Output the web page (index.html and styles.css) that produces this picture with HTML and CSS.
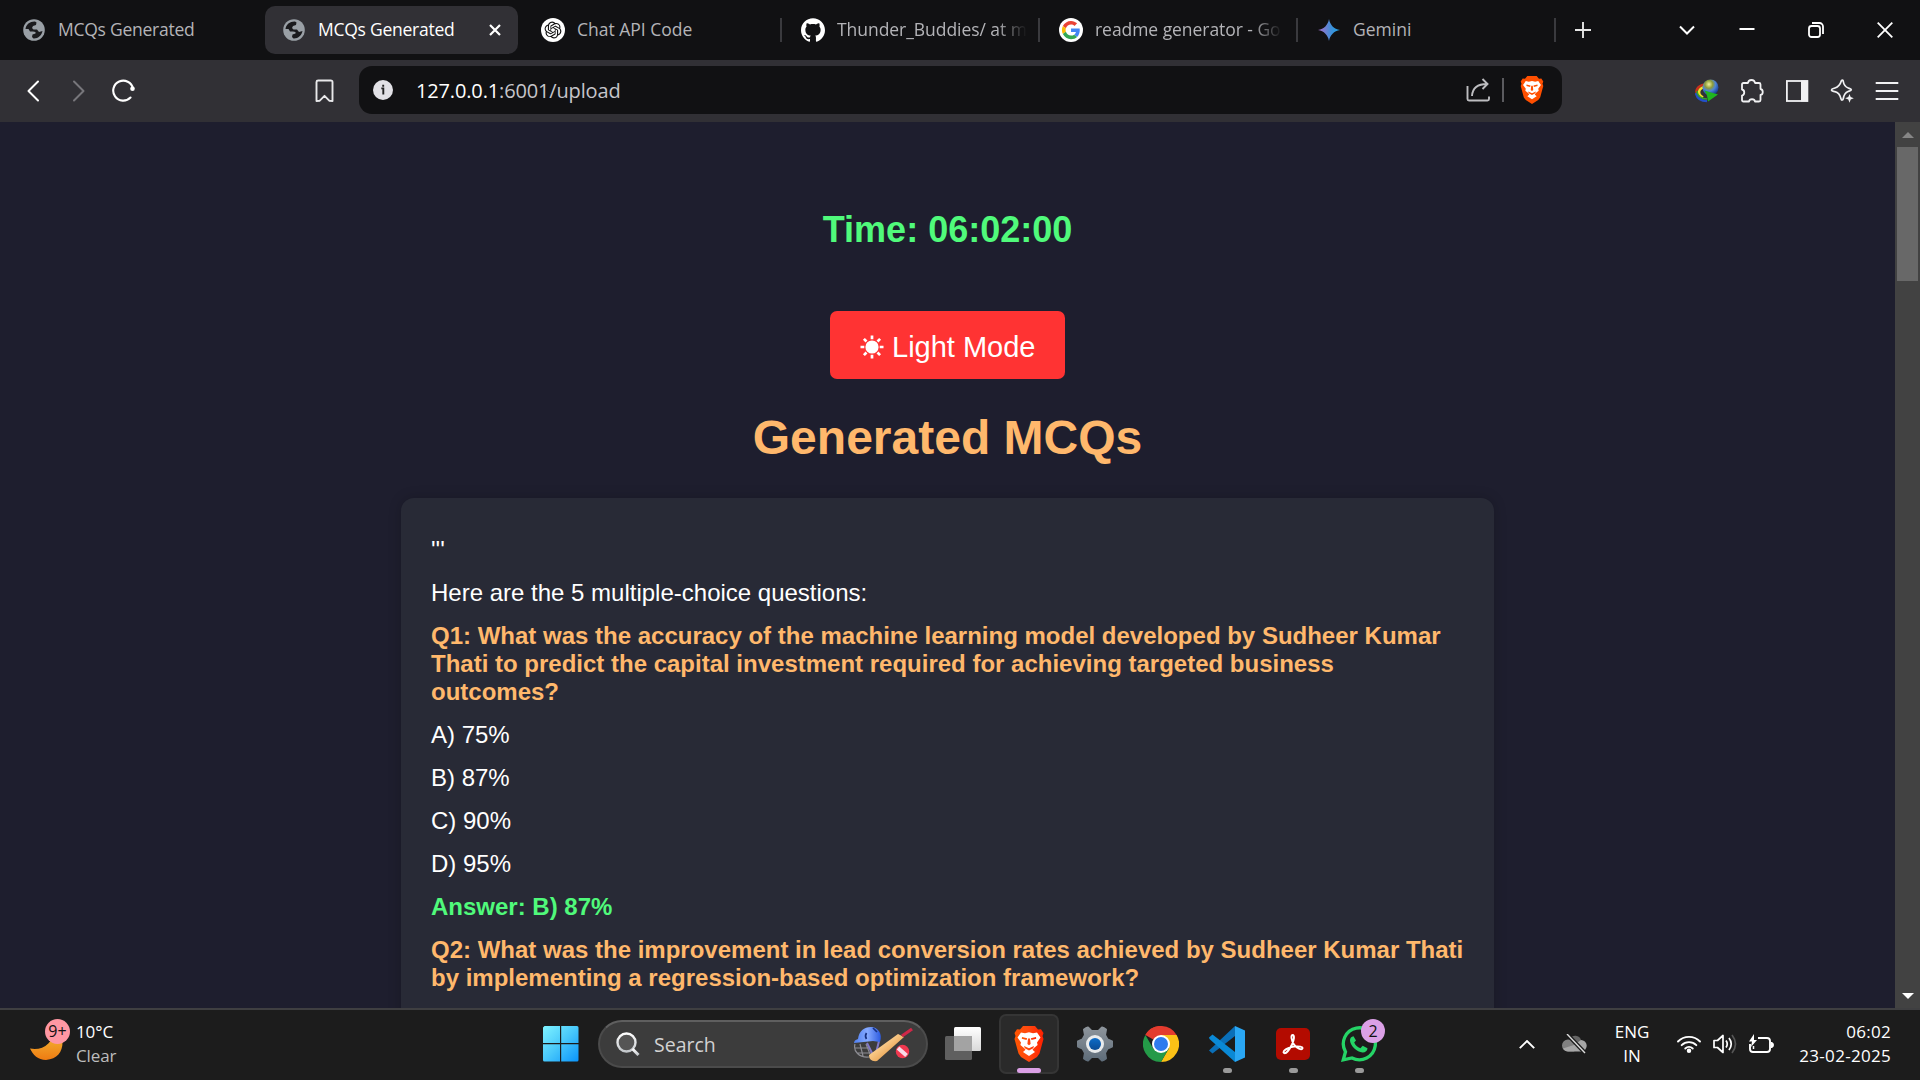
FILE: index.html
```html
<!DOCTYPE html>
<html lang="en">
<head>
<meta charset="utf-8">
<title>MCQs Generated</title>
<link rel="stylesheet" href="styles.css">
</head>
<body>
<svg class="defs" width="0" height="0">
  <defs>
    <linearGradient id="gem" x1="0" x2="1"><stop offset="0.1" stop-color="#9b72cb"/><stop offset="0.6" stop-color="#3e8fd8"/><stop offset="1" stop-color="#1ba1e3"/></linearGradient>
    <linearGradient id="lionfill" x1="0" x2="1"><stop offset="0" stop-color="#ff5500"/><stop offset="0.45" stop-color="#ff4a10"/><stop offset="1" stop-color="#ff2000"/></linearGradient>
    <linearGradient id="win" x1="0" y1="0" x2="1" y2="1"><stop offset="0" stop-color="#7ff3ff"/><stop offset="0.5" stop-color="#48c8fb"/><stop offset="1" stop-color="#0a94fb"/></linearGradient>
    <linearGradient id="moon" x1="0" y1="0" x2="0" y2="1"><stop offset="0" stop-color="#f5c63c"/><stop offset="1" stop-color="#ee7b12"/></linearGradient>
    <linearGradient id="gear" x1="0" y1="0" x2="0" y2="1"><stop offset="0" stop-color="#8d949b"/><stop offset="1" stop-color="#5f6d7a"/></linearGradient>
    <linearGradient id="hub" x1="0" y1="0" x2="0" y2="1"><stop offset="0" stop-color="#0d6cc8"/><stop offset="1" stop-color="#0a4b94"/></linearGradient>
    <linearGradient id="helm" x1="0" x2="1"><stop offset="0" stop-color="#4f7ff0"/><stop offset="0.5" stop-color="#86aaff"/><stop offset="1" stop-color="#2b5ae0"/></linearGradient>
    <linearGradient id="bat" x1="0" y1="0" x2="1" y2="1"><stop offset="0.3" stop-color="#ffd79a"/><stop offset="0.8" stop-color="#e2943f"/></linearGradient>
    <linearGradient id="sheet" x1="0" y1="0" x2="0" y2="1"><stop offset="0" stop-color="#ffffff"/><stop offset="1" stop-color="#d9d9d9"/></linearGradient>
    <linearGradient id="lens" x1="0" y1="0" x2="0" y2="1"><stop offset="0" stop-color="#ffffff"/><stop offset="1" stop-color="#c4c8cc"/></linearGradient>
    <radialGradient id="earth" cx="0.4" cy="0.3" r="0.7"><stop offset="0" stop-color="#f0f29a"/><stop offset="0.35" stop-color="#8d9b3a"/><stop offset="0.6" stop-color="#4d84d8"/><stop offset="1" stop-color="#16398e"/></radialGradient>
    <symbol id="globe" viewBox="0 0 22 22"><circle cx="11" cy="11" r="10.800" fill="#9aa0a6"/><path fill="#1b1b1e" d="M2.500 10C3 5.500 7 2.300 12 2.500l1.500 1-.5 2.500-3 1-1 2 1.500 1.500H14l2 2.500 3.500-1c-.8 4.500-4.500 7.800-9 7.500l-1.500-1.500.5-2.500 3-1v-1.500L10 12.500H7L5.500 10z"/></symbol>
    <symbol id="lion" viewBox="0 0 30 36"><path d="M9 0h12l3 3.500 3-.3L29.500 7l-1 3 1 3-4 14.500-2.500 3.500L15 36l-8-5-2.500-3.500L.5 13l1-3-1-3L3 3.200l3 .3z"/><path fill="#fff" d="M7 6.500l4 .8 4-1 4 1 4-.8 3.500 5-3.500 5 .6 2.500-3.600 3-1.500 1.800L21 26l-6 4-6-4 2.500-2.200L10 22l-3.600-3 .6-2.500-3.500-5z"/><path d="M8 11l5.200 1.300-.7 1.700-4.700-1.200zm14 0l-5.200 1.300.7 1.700 4.700-1.200zM14 12.500h2l.6 5.500-1.600 1.300-1.600-1.300zM10 20l5 2.200 5-2.200-.8 2.200-4.200 2.200-4.200-2.200z"/></symbol>
  </defs>
</svg>

<header class="tabs">
  <div class="tab first"><svg class="fav globe"><use href="#globe"/></svg><span class="label tight">MCQs Generated</span></div>
  <div class="tab active"><svg class="fav globe"><use href="#globe"/></svg><span class="label tight">MCQs Generated</span>
    <svg class="close" width="12" height="12" viewBox="0 0 12 12"><path d="M1 1l10 10M11 1L1 11" stroke="#fff" stroke-width="2.200"/></svg></div>
  <div class="tab sep third"><svg class="fav" viewBox="0 0 24 24"><circle cx="12" cy="12" r="12" fill="#fff"/><g transform="translate(3.600 3.600) scale(.7)"><path fill="#111" d="M22.2819 9.8211a5.9847 5.9847 0 0 0-.5157-4.9108 6.0462 6.0462 0 0 0-6.5098-2.9A6.0651 6.0651 0 0 0 4.9807 4.1818a5.9847 5.9847 0 0 0-3.9977 2.9 6.0462 6.0462 0 0 0 .7427 7.0966 5.98 5.98 0 0 0 .511 4.9107 6.051 6.051 0 0 0 6.5146 2.9001A5.9847 5.9847 0 0 0 13.2599 24a6.0557 6.0557 0 0 0 5.7718-4.2058 5.9894 5.9894 0 0 0 3.9977-2.9001 6.0557 6.0557 0 0 0-.7475-7.0729zm-9.022 12.6081a4.4755 4.4755 0 0 1-2.8764-1.0408l.1419-.0804 4.7783-2.7582a.7948.7948 0 0 0 .3927-.6813v-6.7369l2.02 1.1686a.071.071 0 0 1 .038.052v5.5826a4.504 4.504 0 0 1-4.4945 4.4944zm-9.6607-4.1254a4.4708 4.4708 0 0 1-.5346-3.0137l.142.0852 4.783 2.7582a.7712.7712 0 0 0 .7806 0l5.8428-3.3685v2.3324a.0804.0804 0 0 1-.0332.0615L9.74 19.9502a4.4992 4.4992 0 0 1-6.1408-1.6464zM2.3408 7.8956a4.485 4.485 0 0 1 2.3655-1.9728V11.6a.7664.7664 0 0 0 .3879.6765l5.8144 3.3543-2.0201 1.1685a.0757.0757 0 0 1-.071 0l-4.8303-2.7865A4.504 4.504 0 0 1 2.3408 7.872zm16.5963 3.8558L13.1038 8.364 15.1192 7.2a.0757.0757 0 0 1 .071 0l4.8303 2.7913a4.4944 4.4944 0 0 1-.6765 8.1042v-5.6772a.79.79 0 0 0-.407-.667zm2.0107-3.0231l-.142-.0852-4.7735-2.7818a.7759.7759 0 0 0-.7854 0L9.409 9.2297V6.8974a.0662.0662 0 0 1 .0284-.0615l4.8303-2.7866a4.4992 4.4992 0 0 1 6.6802 4.66zM8.3065 12.863l-2.02-1.1638a.0804.0804 0 0 1-.038-.0567V6.0742a4.4992 4.4992 0 0 1 7.3757-3.4537l-.142.0805L8.704 5.459a.7948.7948 0 0 0-.3927.6813zm1.0976-2.3654l2.602-1.4998 2.6069 1.4998v2.9994l-2.5974 1.4997-2.6067-1.4997Z"/></g></svg><span class="label">Chat API Code</span></div>
  <div class="tab sep"><svg class="fav" viewBox="0 0 24 24"><path fill="#fff" d="M12 .297c-6.63 0-12 5.373-12 12 0 5.303 3.438 9.8 8.205 11.385.6.113.82-.258.82-.577 0-.285-.01-1.04-.015-2.04-3.338.724-4.042-1.61-4.042-1.61C4.422 18.07 3.633 17.7 3.633 17.7c-1.087-.744.084-.729.084-.729 1.205.084 1.838 1.236 1.838 1.236 1.07 1.835 2.809 1.305 3.495.998.108-.776.417-1.305.76-1.605-2.665-.3-5.466-1.332-5.466-5.93 0-1.31.465-2.38 1.235-3.22-.135-.303-.54-1.523.105-3.176 0 0 1.005-.322 3.3 1.23.96-.267 1.98-.399 3-.405 1.02.006 2.04.138 3 .405 2.28-1.552 3.285-1.23 3.285-1.23.645 1.653.24 2.873.12 3.176.765.84 1.23 1.91 1.23 3.22 0 4.61-2.805 5.625-5.475 5.92.42.36.81 1.096.81 2.22 0 1.606-.015 2.896-.015 3.286 0 .315.21.69.825.57C20.565 22.092 24 17.592 24 12.297c0-6.627-5.373-12-12-12"/></svg><span class="label fade">Thunder_Buddies/ at m</span></div>
  <div class="tab sep"><svg class="fav" viewBox="0 0 24 24"><circle cx="12" cy="12" r="12" fill="#fff"/><g transform="translate(2.900 2.900) scale(.38)"><path fill="#EA4335" d="M24 9.500c3.540 0 6.710 1.220 9.210 3.600l6.850-6.850C35.900 2.380 30.470 0 24 0 14.620 0 6.510 5.380 2.560 13.220l7.980 6.190C12.430 13.720 17.740 9.500 24 9.500z"/><path fill="#4285F4" d="M46.980 24.550c0-1.570-.15-3.090-.38-4.550H24v9.020h12.940c-.58 2.960-2.260 5.480-4.780 7.180l7.730 6c4.510-4.180 7.090-10.360 7.090-17.650z"/><path fill="#FBBC05" d="M10.530 28.590c-.48-1.450-.76-2.990-.76-4.590s.27-3.140.76-4.590l-7.980-6.190C.92 16.460 0 20.120 0 24c0 3.880.92 7.540 2.560 10.780l7.970-6.190z"/><path fill="#34A853" d="M24 48c6.480 0 11.930-2.130 15.890-5.810l-7.730-6c-2.150 1.450-4.920 2.300-8.160 2.300-6.260 0-11.570-4.220-13.470-9.910l-7.980 6.190C6.510 42.620 14.620 48 24 48z"/></g></svg><span class="label fade">readme generator - Go</span></div>
  <div class="tab sep"><svg class="fav" viewBox="0 0 24 24"><path fill="url(#gem)" d="M12 1c1 6 5 10 11 11-6 1-10 5-11 11-1-6-5-10-11-11C7 11 11 7 12 1z"/></svg><span class="label">Gemini</span></div>
  <svg class="plus" width="16" height="16" viewBox="0 0 16 16"><path d="M8 0v16M0 8h16" stroke="#e6e6e6" stroke-width="1.900"/></svg>
  <div class="winctl">
    <svg width="16" height="16" viewBox="0 0 16 16"><path d="M1 4.500l7 7 7-7" fill="none" stroke="#fff" stroke-width="2"/></svg>
    <svg width="16" height="16" viewBox="0 0 16 16"><path d="M.5 7h15" stroke="#fff" stroke-width="2"/></svg>
    <svg width="16" height="16" viewBox="0 0 16 16" fill="none" stroke="#fff" stroke-width="1.800"><rect x="1" y="4" width="11" height="11" rx="2.500"/><path d="M4 1h7.500A3.600 3.600 0 0 1 15 4.600V12"/></svg>
    <svg width="16" height="16" viewBox="0 0 16 16"><path d="M.7.7l14.600 14.600M15.300.7L.7 15.300" stroke="#fff" stroke-width="1.800"/></svg>
  </div>
</header>

<nav class="toolbar">
  <svg class="tool" viewBox="0 0 24 24" fill="none" stroke="#fff" stroke-width="2" stroke-linecap="round" stroke-linejoin="round"><path d="M16 2.500L6.500 12l9.500 9.500"/></svg>
  <svg class="tool" viewBox="0 0 24 24" fill="none" stroke="#77767b" stroke-width="2" stroke-linecap="round" stroke-linejoin="round"><path d="M7 2.500l9.500 9.500L7 21.500"/></svg>
  <svg class="tool" viewBox="0 0 24 24" fill="none" stroke="#fff" stroke-width="2.100" stroke-linecap="round"><path d="M18.500 18.500A10 10 0 1 1 21 9.500"/><circle cx="20.500" cy="9.700" r="2.300" fill="#fff" stroke="none"/></svg>
  <svg class="tool mark" viewBox="0 0 24 24" fill="none" stroke="#e8e8ea" stroke-width="1.900" stroke-linejoin="round"><path d="M4.500 3a1.600 1.600 0 0 1 1.600-1.500h12.400A1.600 1.600 0 0 1 20.500 3v19l-3-.2-5-5-5 5-3 .2z"/></svg>
  <div class="address">
    <svg width="20" height="20" viewBox="0 0 20 20"><circle cx="10" cy="10" r="10" fill="#e2e1e6"/><path d="M8.300 8.400h2v6.100M10.200 4.800v2" stroke="#222" stroke-width="1.900" fill="none"/></svg>
    <span class="url">127.0.0.1<em>:6001/upload</em></span>
    <svg class="share" width="24" height="24" viewBox="0 0 24 24" fill="none" stroke="#bdbdc0" stroke-width="1.900"><path d="M1.500 8v13a1.500 1.500 0 0 0 1.500 1.500h18.500a1.500 1.500 0 0 0 1.500-1.500v-2.500M6 18C6.500 10 11 6 21 6M16.500 1l5 5-5 5"/></svg>
    <i class="rule"></i>
    <svg width="24" height="28" fill="#ff4f00"><use href="#lion"/></svg>
  </div>
  <div class="ext">
    <svg class="tool" viewBox="0 0 24 24"><path d="M10 5.500C1 7 0 13 3 17" fill="none" stroke="#c8301c" stroke-width="2.500"/><path d="M10 8C3 9.500 2 15 8 18.500" fill="none" stroke="#f2e12a" stroke-width="2.500"/><path d="M1 14c1 5 5 8 11 8" fill="none" stroke="#2450c8" stroke-width="2.500"/><path d="M2 12c0 5 5 8 10 8" fill="none" stroke="#35a02c" stroke-width="1.500"/><circle cx="15.500" cy="8.500" r="8" fill="url(#earth)"/><path d="M9.500 11.500l13.500 4L13 22.500l-1-6z" fill="#1fb51f"/></svg>
    <svg class="tool" viewBox="0 0 24 24" fill="none" stroke="#f1f1f3" stroke-width="1.800" stroke-linejoin="round"><path d="M2 5.500q0-1.500 1.500-1.500H8c.4-4 6.500-4 7 0h4q1.500 0 1.500 1.500V10c3 .5 3 5.500 0 6v5q0 1.500-1.500 1.500h-4c-.5-3-5.500-3-6 0H3.500Q2 22.500 2 21v-4.500c3-.8 3-5.500 0-6z"/></svg>
    <svg class="tool" viewBox="0 0 24 24"><rect x="1.900" y="2" width="20.500" height="20" fill="none" stroke="#f1f1f3" stroke-width="1.800"/><path fill="#f1f1f3" d="M16 1.500h7v21h-7z"/></svg>
    <svg class="tool" viewBox="0 0 24 24" fill="none" stroke="#f1f1f3" stroke-width="1.700" stroke-linejoin="round"><path d="M11.500 1.500c1-1 1.700 0 1.800 1 .5 3.500 2 5.300 5 6.500 1.500.6 3 .9 3 1.800s-2 1.200-3.300 1.700c-2.500 1-4 3-4.700 7-.3 1.800-1.800 2.200-2.300.2C10 15.700 8.500 13.500 5 12.700c-1.500-.4-3.500-.8-3.500-1.800S3.500 9.500 5 9c3.500-1.200 5.300-3.500 6.500-7.500z"/><path fill="#f1f1f3" stroke="none" d="M19.500 15l1.200 3 3.100 1.200-3.100 1.200-1.200 3.300-1.200-3.300-3.100-1.200 3.100-1.200z"/></svg>
    <svg class="tool" viewBox="0 0 24 24"><path d="M.7 4h22.600M.7 12h22.600M.7 20h22.600" stroke="#f1f1f3" stroke-width="2"/></svg>
  </div>
</nav>

<div class="viewport">
  <main class="page">
    <div class="time">Time: 06:02:00</div>
    <div class="mode"><svg width="24" height="24" viewBox="0 0 24 24"><circle cx="12" cy="12" r="6.600" fill="#fff"/><path d="M12 .5v3.800M12 19.700v3.800M.5 12h3.800M19.700 12h3.800M3.900 3.900l2.600 2.600M17.500 17.500l2.600 2.600M20.100 3.900l-2.600 2.600M6.500 17.500l-2.600 2.600" stroke="#fff" stroke-width="2.700"/></svg><span>Light Mode</span></div>
    <h1>Generated MCQs</h1>
    <section class="card">
      <p>'''</p>
      <p>Here are the 5 multiple-choice questions:</p>
      <p class="q">Q1: What was the accuracy of the machine learning model developed by Sudheer Kumar<br>Thati to predict the capital investment required for achieving targeted business<br>outcomes?</p>
      <p>A) 75%</p>
      <p>B) 87%</p>
      <p>C) 90%</p>
      <p>D) 95%</p>
      <p class="a">Answer: B) 87%</p>
      <p class="q">Q2: What was the improvement in lead conversion rates achieved by Sudheer Kumar Thati<br>by implementing a regression-based optimization framework?</p>
    </section>
  </main>
  <aside class="scroll">
    <svg width="12" height="6" viewBox="0 0 12 6"><path fill="#868686" d="M6 0l6 6H0z"/></svg>
    <div class="thumb"></div>
    <svg class="down" width="12" height="6" viewBox="0 0 12 6"><path fill="#fff" d="M6 6L0 0h12z"/></svg>
  </aside>
</div>

<footer class="taskbar">
  <div class="weather">
    <div class="moon"><svg width="34" height="34" viewBox="0 0 34 34"><path fill="url(#moon)" d="M25 0C37 10 35 32 16 33 8 33 3 28 0 21.500 12 24 24 17 25 0z"/></svg><b>9+</b></div>
    <div class="wtext"><span>10°C</span><span class="dim">Clear</span></div>
  </div>
  <div class="apps">
    <svg class="start" width="36" height="36" viewBox="0 0 36 36"><path fill="url(#win)" d="M1.500 0H17v17H0V1.500zM18.200 0H34q1.500 0 1.500 1.500V17H18.200zM0 18.200h17v17.300H1.500Q0 35.500 0 34zM18.200 18.200h17.300V34q0 1.500-1.500 1.500H18.200z"/></svg>
    <div class="search">
      <svg width="24" height="24" viewBox="0 0 24 24" fill="none" stroke="url(#lens)"><circle cx="10.500" cy="10.500" r="9" stroke-width="2.400" fill="#555"/><path d="M16.500 17l6 6" stroke-width="3"/></svg>
      <span>Search</span>
      <svg class="cricket" width="60" height="36" viewBox="0 0 60 36"><g fill="none" stroke="#8c8c92" stroke-width="1.200"><path d="M2 18c-2 7 4 14 14 13M2 22h14M4 27h14M7 18l3 12M13 18l4 10"/></g><path d="M14 17l6 12M26 15l-3 12" stroke="#8178c4" stroke-width="2" fill="none"/><path d="M5 13C6 5 11 1 18 1c7 0 12 7 9 15l-7-1-19 2q0-3 4-4z" fill="url(#helm)"/><path d="M13.500 7q-2 3 0 6M20 2l4 4" stroke="#173080" stroke-width="1.700" fill="none"/><path d="M16 29L45 8l6 3-27 24q-8 1-8-6z" fill="url(#bat)"/><path d="M49 10l10-7" stroke="#cf2848" stroke-width="3.200"/><circle cx="49.500" cy="25.500" r="6.700" fill="#f0384f"/><path d="M45 22l8.500 7.500" stroke="#f7dce8" stroke-width="4"/></svg>
    </div>
    <div class="app"><svg width="36" height="36" viewBox="0 0 36 36"><rect x="9" y="1" width="27" height="24" rx="1.500" fill="url(#sheet)"/><rect x="0" y="10" width="27" height="24" rx="1.500" fill="#6b6b6b" fill-opacity=".85"/><path fill="#a3a3a3" d="M9 10h18v15H9z"/></svg></div>
    <div class="app current"><svg width="30" height="36" fill="url(#lionfill)"><use href="#lion"/></svg><i class="on"></i></div>
    <div class="app"><svg width="36" height="36" viewBox="0 0 36 36"><path fill="url(#gear)" stroke="url(#gear)" stroke-width="2" stroke-linejoin="round" d="M8.500 2.500l2.500-1 3.500 3.500h7L25 1.500l2.500 1 1.500 1-1 5.500 2.500 4.500 4.500 2v5l-4.500 2L28 27l1 5.500-1.500 1-2.500 1-3.500-3.500h-7L11 34.500l-2.500-1-1.500-1L8 27l-2.500-4.500-4.500-2v-5l4.500-2L8 9 7 3.500z"/><circle cx="18" cy="18" r="9" fill="#e9ebec"/><circle cx="18" cy="18" r="6" fill="url(#hub)"/></svg></div>
    <div class="app"><svg width="36" height="36" viewBox="0 0 36 36"><path fill="#e33b2e" d="M18 18L2.400 9A18 18 0 0 1 33.600 9z"/><path fill="#fbc116" d="M18 9h15.600A18 18 0 0 1 18 36l7.800-13.500z"/><path fill="#249a48" d="M2.400 9A18 18 0 0 0 18 36l7.800-13.500-15.600 0z"/><path fill="#e33b2e" d="M2.400 9C6 2 12 0 18 0l9 9z"/><circle cx="18" cy="18" r="9" fill="#fff"/><circle cx="18" cy="18" r="7" fill="#2f7bee"/></svg></div>
    <div class="app"><svg width="36" height="36" viewBox="0 0 36 36"><path fill="#0a6fb8" d="M0 24.500L26 0v10L3.500 27.500z"/><path fill="#0a89d6" d="M0 11.500l3.500-3L26 26v10L.5 13z"/><path fill="#2aa7f4" d="M26 0l10 4.500v27L26 36z"/></svg><i></i></div>
    <div class="app"><svg width="34" height="32" viewBox="0 0 34 32"><rect width="34" height="32" rx="5" fill="#b30b00"/><path fill="none" stroke="#fff" stroke-width="1.900" d="M16.500 7c2.500 0 1.500 5-.5 9.500C13.500 21.500 10 26 8 25c-2.500-2 5-6 10-6.500 5-.5 9 .2 8.500 2-.7 2-6-.5-8.500-4-2.500-3.500-3.500-9.500-1.500-9.500z"/></svg><i></i></div>
    <div class="app"><svg width="36" height="36" viewBox="0 0 36 36"><path fill="none" stroke="#25d366" stroke-width="3.300" d="M2.300 33.800l2.200-8A16 16 0 1 1 11 32z"/><path fill="#25d366" d="M12.500 10.200c-2 .1-3.700 2-3.500 4.500.6 5.300 7 11.300 12.500 11.800 2.500.2 5-1.500 5-4.200l-4.800-2.600-2.300 2.500c-3-1-5-3-6.200-5.700l1.800-2.100z"/></svg><b>2</b><i></i></div>
  </div>
  <div class="tray">
    <svg class="up" width="16" height="9" viewBox="0 0 16 9"><path d="M.8 8.200L8 1l7.200 7.200" fill="none" stroke="#fff" stroke-width="1.900"/></svg>
    <svg class="cloud" width="26" height="20" viewBox="0 0 26 20"><path fill="#666" d="M8 5a6 6 0 0 1 11 1l5 5H5z"/><path fill="#808080" d="M6 5.500c4 0 7 3 12 6l-6 6H6a6 6 0 0 1 0-12z"/><path fill="#a6a6a6" d="M12 11l7-5a5.800 5.800 0 0 1 1 11.500H6c-2 0-4-1-5-3z"/><path d="M5 0l18 19" stroke="#1c1c1c" stroke-width="4"/><path d="M5 0l18 19" stroke="#ddd" stroke-width="1.400"/></svg>
    <div class="lang"><span>ENG</span><span>IN</span></div>
    <svg class="wifi" width="24" height="18" viewBox="0 0 24 18" fill="none" stroke="#fff" stroke-width="1.900" stroke-linecap="round"><path d="M1 6.500a15.500 15.500 0 0 1 22 0M4.700 10.200a10.300 10.300 0 0 1 14.600 0M8.300 13.500a5.400 5.400 0 0 1 7.400 0"/><circle cx="12" cy="15.700" r="1.300" fill="#fff"/></svg>
    <svg class="vol" width="24" height="20" viewBox="0 0 24 20" fill="none" stroke="#fff" stroke-width="1.700" stroke-linejoin="round"><path d="M1 6.500h3.500L10 1.500v17l-5.500-5H1z"/><path d="M13 6.500q2.500 3.500 0 7M16 4q4.500 6 0 12"/><path stroke="#555" d="M19 1q7 9 0 18"/></svg>
    <svg class="batt" width="25" height="20" viewBox="0 0 25 20"><path d="M9 4h9q3 0 3 3v8q0 3-3 3H4q-3 0-3-3v-5" fill="none" stroke="#fff" stroke-width="1.900"/><path fill="#fff" d="M22 8h1q2 1 2 3t-2 3h-1zM5 0L0 7.500h3L2 13l6-7H5z"/><path d="M4.500 12v3" stroke="#fff" stroke-width="1.500"/></svg>
    <div class="clock"><span>06:02</span><span>23-02-2025</span></div>
  </div>
</footer>
</body>
</html>
```
FILE: styles.css
```css
* { box-sizing: border-box; }
body {
  margin: 0;
  width: 1920px;
  height: 1080px;
  overflow: hidden;
  display: flex;
  flex-direction: column;
  background: #1e1e2e;
  color: #fff;
  font-family: "Open Sans", "Noto Sans", sans-serif;
}
svg { display: block; flex: none; }
.defs { position: absolute; }

/* Tab strip */
.tabs {
  flex: none;
  height: 60px;
  background: #111113;
  display: flex;
  align-items: center;
  padding-left: 7px;
}
.tab {
  flex: none;
  width: 258px;
  height: 48px;
  display: flex;
  align-items: center;
  padding: 0 17px;
  font-size: 17.500px;
  color: #b4b4b8;
}
.tab.first { padding-left: 15px; }
.tab.sep {
  padding: 0 16px 0 19px;
  background: linear-gradient(#3a3a3e, #3a3a3e) no-repeat right center / 2px 24px;
}
.tab.third { width: 259px; padding-left: 18px; }
.tab.active {
  width: 253px;
  margin-right: 5px;
  background: #313035;
  border-radius: 10px;
  color: #fff;
}
.fav { width: 24px; height: 24px; margin-right: 12px; }
.fav.globe { width: 22px; height: 22px; margin: 0 13px 0 1px; }
.label { flex: 1; white-space: nowrap; line-height: 26px; padding-bottom: 2px; }
.label.tight { letter-spacing: -0.25px; }
.label.fade {
  letter-spacing: -0.05px;
  -webkit-mask-image: linear-gradient(90deg, #000 84%, transparent);
  mask-image: linear-gradient(90deg, #000 84%, transparent);
}
.plus { margin-left: 19px; }
.winctl { margin-left: auto; padding-right: 27px; display: flex; gap: 53px; }
.winctl svg:first-child { margin-right: -9px; }

/* Navigation bar */
.toolbar {
  flex: none;
  height: 62px;
  background: #313035;
  display: flex;
  align-items: center;
  padding: 0 21px 0 22px;
}
.tool { width: 24px; height: 24px; margin-right: 21px; }
.tool.mark { margin: 0 23px 0 155px; }
.address {
  width: 1203px;
  height: 48px;
  margin-top: -2px;
  border-radius: 13px;
  background: #111113;
  display: flex;
  align-items: center;
  padding: 0 18px 0 14px;
}
.url { margin-left: 23px; font-size: 20px; letter-spacing: -0.15px; }
.url em { font-style: normal; color: #c6c5ca; }
.share { margin-left: auto; }
.rule { width: 2px; height: 24px; background: #5b5b5f; margin: 0 16px 0 12px; }
.ext { margin-left: auto; display: flex; }
.ext .tool { margin: 0 0 0 21px; }

/* Page */
.viewport { flex: none; height: 886px; display: flex; overflow: hidden; }
.page {
  width: 1895px;
  padding-top: 87px;
  display: flex;
  flex-direction: column;
  align-items: center;
  font-family: "Liberation Sans", Arial, sans-serif;
}
.time { font-size: 36px; line-height: 42px; font-weight: 700; color: #50fa7b; }
.mode {
  flex: none;
  width: 235px;
  height: 68px;
  margin-top: 60px;
  padding: 4px 0 0 30px;
  border-radius: 7px;
  background: #ff3333;
  display: flex;
  align-items: center;
  gap: 8px;
  font-size: 29px;
  white-space: nowrap;
}
h1 { margin: 30px 0 31px; font-size: 48px; line-height: 58px; color: #ffb86c; }
.card {
  width: 1093px;
  flex: none;
  height: 700px;
  padding: 38px 30px;
  border-radius: 13px;
  background: #282a36;
  box-shadow: 0 0 13px rgba(0, 0, 0, 0.2);
  font-size: 24px;
  line-height: 28px;
}
.card p { margin: 0 0 15px; white-space: nowrap; }
.card .q { font-weight: 700; color: #ffb86c; }
.card .a { font-weight: 700; color: #50fa7b; }

.scroll {
  width: 25px;
  background: #424242;
  display: flex;
  flex-direction: column;
  align-items: center;
  padding: 10px 0 9px;
}
.thumb { width: 21px; height: 134px; margin-top: 9px; background: #686868; }
.scroll .down { margin-top: auto; }

/* Taskbar */
.taskbar {
  flex: none;
  height: 72px;
  padding-bottom: 2px;
  background: #1c1c1c;
  border-top: 2px solid #3f3f41;
  display: flex;
  align-items: center;
}
.weather { width: 543px; padding-left: 30px; display: flex; align-items: center; }
.moon { position: relative; width: 46px; }
.moon b {
  position: absolute;
  left: 15px;
  top: -8px;
  width: 25px;
  height: 25px;
  border-radius: 50%;
  background: #ff97a3;
  color: #111;
  font-size: 16px;
  font-weight: 400;
  line-height: 25px;
  text-align: center;
}
.wtext, .lang, .clock { display: flex; flex-direction: column; font-size: 17px; line-height: 24px; }
.wtext { letter-spacing: -0.1px; }
.dim { color: #bdbdbd; }
.apps { display: flex; align-items: center; }
.search {
  width: 330px;
  height: 48px;
  margin: 0 5px 0 19px;
  border: 2px solid #4b4b4b;
  border-top-color: #5f5f5f;
  border-radius: 24px;
  background: #3c3c3c;
  display: flex;
  align-items: center;
  padding: 0 13px 0 16px;
  font-size: 19.500px;
  color: #d2d2d2;
}
.search span { margin-left: 14px; }
.cricket { margin-left: auto; }
.app {
  position: relative;
  width: 60px;
  height: 60px;
  margin-right: 6px;
  border-radius: 7px;
  display: flex;
  align-items: center;
  justify-content: center;
}
.app.current { background: #2a2a2a; border: 2px solid #353535; }
.app i {
  position: absolute;
  bottom: 1px;
  left: calc(50% - 4px);
  width: 9px;
  height: 5px;
  border-radius: 3px;
  background: #9a9a9a;
}
.app i.on { left: calc(50% - 12px); bottom: -1px; width: 24px; background: #dba0e6; }
.app b {
  position: absolute;
  left: 32px;
  top: 5px;
  width: 24px;
  height: 24px;
  border-radius: 50%;
  background: #dba0e6;
  color: #111;
  font-size: 16px;
  font-weight: 400;
  line-height: 24px;
  text-align: center;
}
.tray { margin-left: auto; padding-right: 29px; display: flex; align-items: center; }
.cloud { margin-left: 27px; }
.lang { width: 60px; margin-left: 14px; align-items: center; }
.wifi { margin-left: 15px; }
.vol { margin-left: 12px; }
.batt { margin-left: 12px; }
.clock { width: 104px; margin-left: 13px; align-items: flex-end; letter-spacing: 0.3px; }
```
